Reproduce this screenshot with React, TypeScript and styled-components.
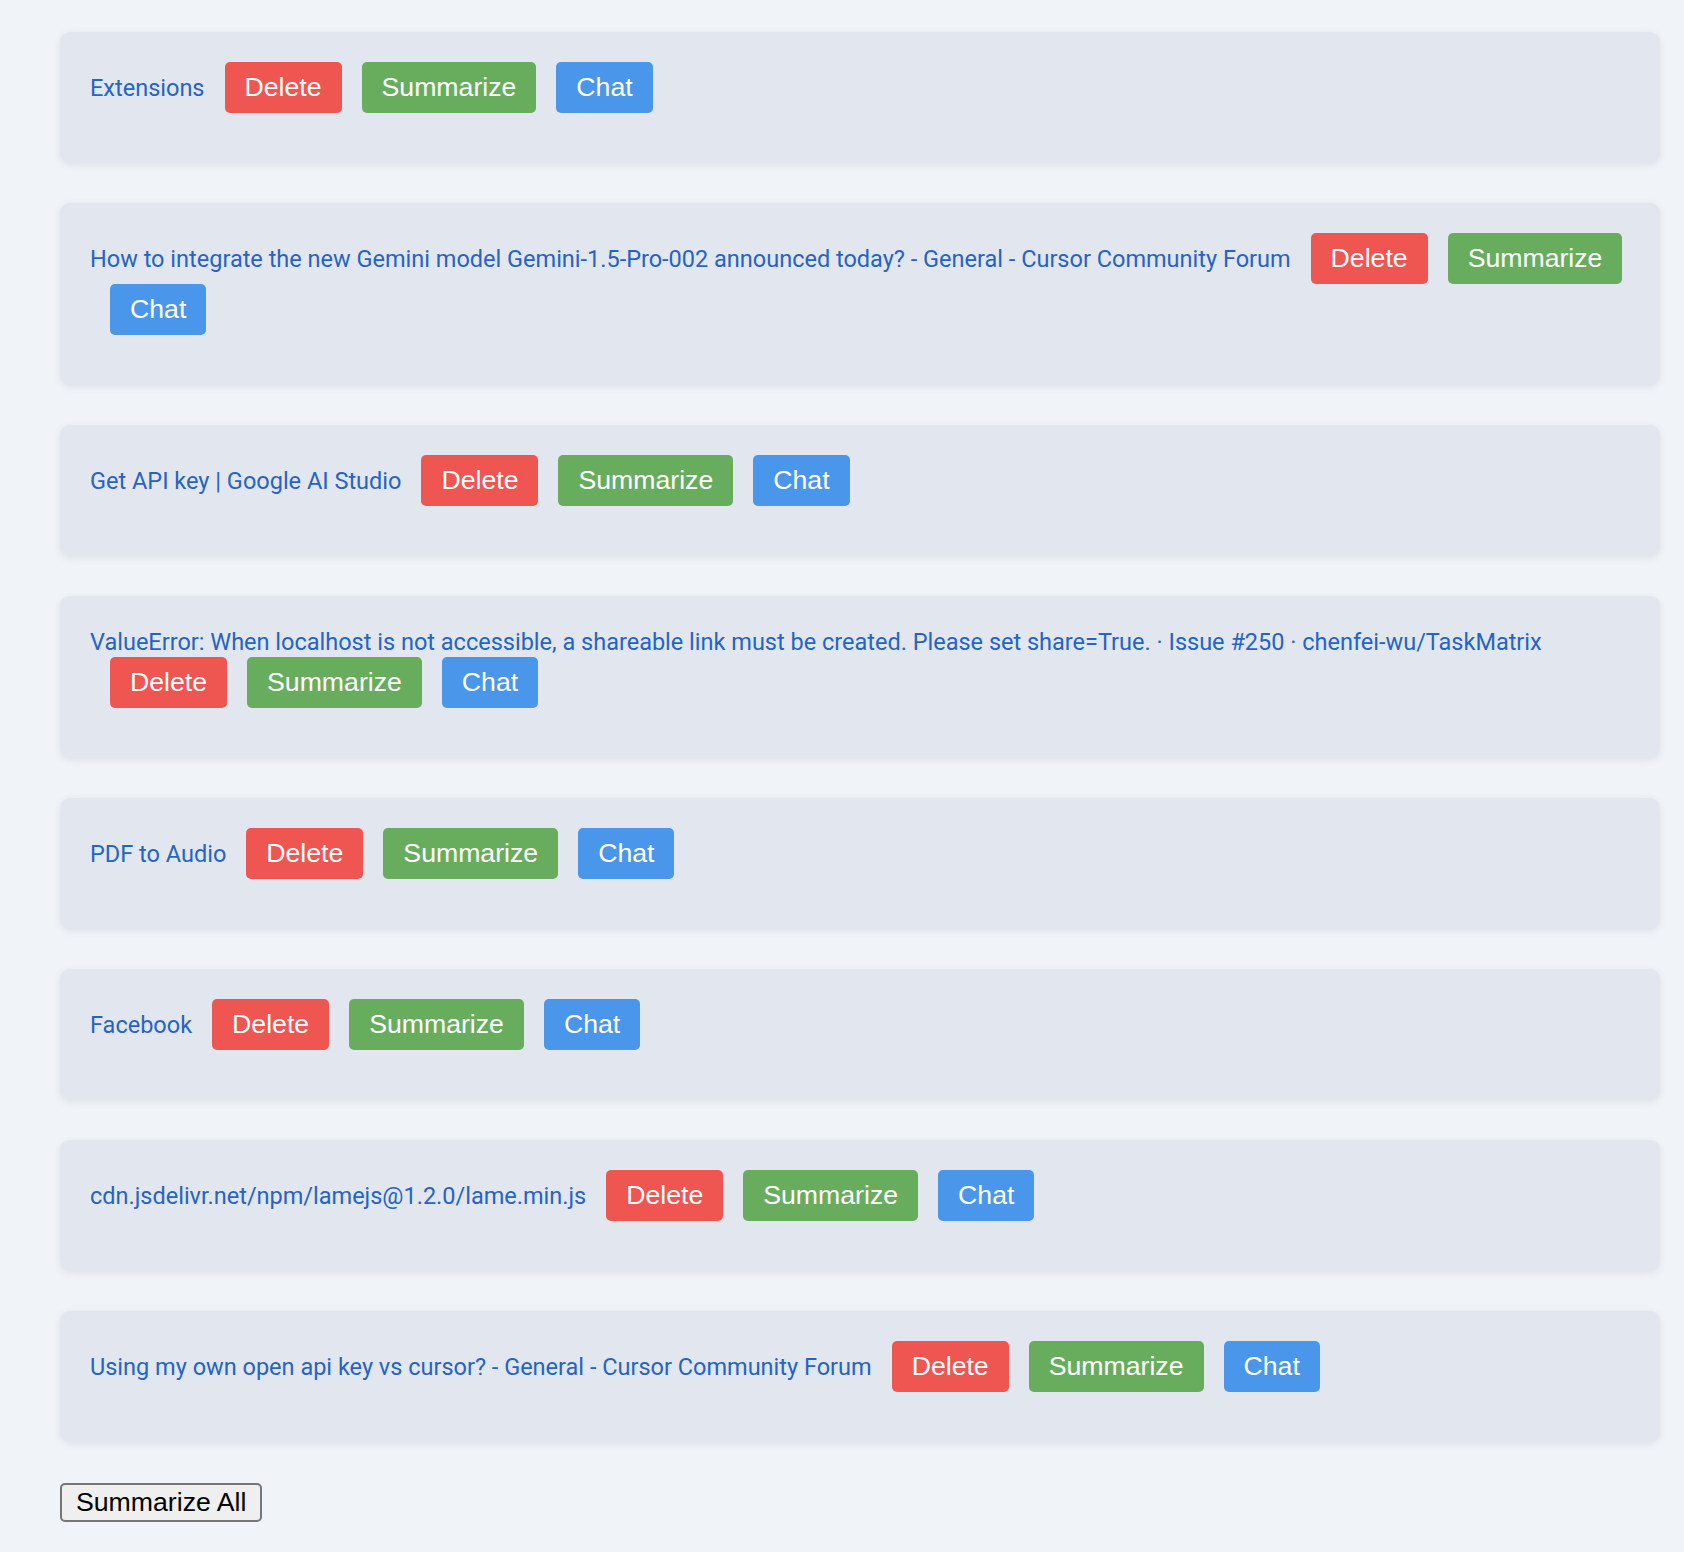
import React from "react";
import styled, { createGlobalStyle } from "styled-components";

const GlobalStyle = createGlobalStyle`
  html, body {
    margin: 0;
    padding: 0;
    background: #f0f3f8;
  }
  body {
    font-family: "Liberation Sans", Arial, sans-serif;
  }
`;

const Page = styled.main`
  padding: 32px 24px 28px 60px;
`;

const List = styled.ul`
  list-style: none;
  margin: 0 0 41px 0;
  padding: 0;
  display: flex;
  flex-direction: column;
  gap: 40px;
`;

const Card = styled.li`
  background: #e2e7ef;
  border-radius: 10px;
  padding: 30px 30px 50px 30px;
  box-shadow: 0 2px 8px rgba(0, 0, 0, 0.08);
  font-family: "Liberation Sans", Arial, sans-serif;
  font-size: 26.67px;
  line-height: normal;
`;

const Title = styled.a`
  font-family: Roboto, "Liberation Sans", sans-serif;
  font-size: 23.5px;
  color: #2563c4;
  text-decoration: none;
  cursor: pointer;
`;

type Variant = "delete" | "summarize" | "chat";

const colors: Record<Variant, string> = {
  delete: "#ef5551",
  summarize: "#68ad5e",
  chat: "#4a96eb",
};

const ActionButton = styled.button<{ $variant: Variant }>`
  display: inline-block;
  vertical-align: baseline;
  margin-left: 20px;
  padding: 10px 20px;
  border: none;
  border-radius: 5px;
  background: ${(p) => colors[p.$variant]};
  color: #ffffff;
  font-family: "Liberation Sans", Arial, sans-serif;
  font-size: 26.67px;
  line-height: normal;
  cursor: pointer;
`;

const SummarizeAll = styled.button`
  font-family: "Liberation Sans", Arial, sans-serif;
  font-size: 26.67px;
  line-height: normal;
  padding: 2px 14px;
  border: 2px solid #767676;
  border-radius: 5px;
  background: #efefef;
  color: #000000;
  cursor: pointer;
`;

const tabs = [
  "Extensions",
  "How to integrate the new Gemini model Gemini-1.5-Pro-002 announced today? - General - Cursor Community Forum",
  "Get API key | Google AI Studio",
  "ValueError: When localhost is not accessible, a shareable link must be created. Please set share=True. · Issue #250 · chenfei-wu/TaskMatrix",
  "PDF to Audio",
  "Facebook",
  "cdn.jsdelivr.net/npm/lamejs@1.2.0/lame.min.js",
  "Using my own open api key vs cursor? - General - Cursor Community Forum",
];

export default function App() {
  return (
    <>
      <GlobalStyle />
      <Page>
        <List>
          {tabs.map((t) => (
            <Card key={t}>
              <Title>{t}</Title>
              <ActionButton $variant="delete">Delete</ActionButton>
              <ActionButton $variant="summarize">Summarize</ActionButton>
              <ActionButton $variant="chat">Chat</ActionButton>
            </Card>
          ))}
        </List>
        <SummarizeAll>Summarize All</SummarizeAll>
      </Page>
    </>
  );
}
